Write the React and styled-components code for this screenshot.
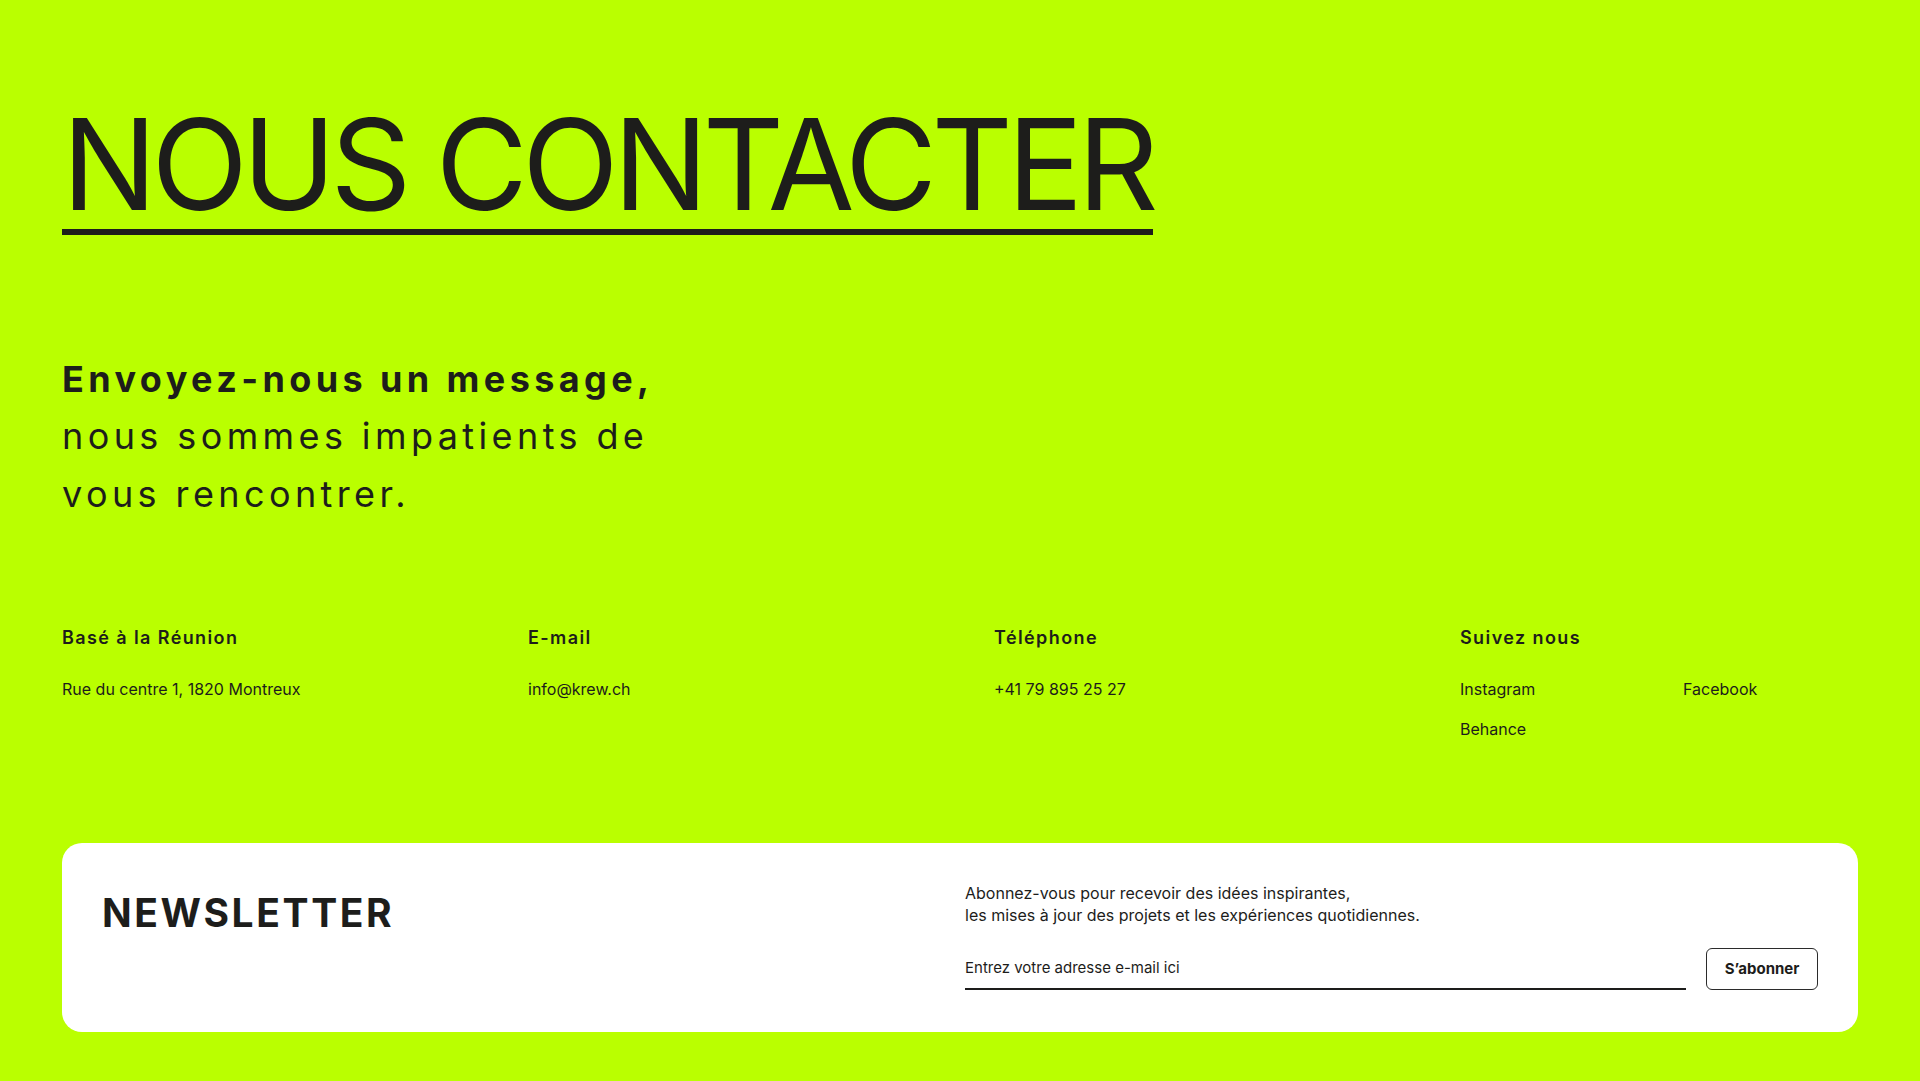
import styled, { createGlobalStyle } from 'styled-components';

const GlobalStyle = createGlobalStyle`
  html, body {
    margin: 0;
    padding: 0;
    background-color: #baff00;
  }
  body {
    font-family: Inter, 'Liberation Sans', Arial, sans-serif;
    color: #1d1d1b;
  }
  * {
    box-sizing: border-box;
  }
`;

const Page = styled.main`
  display: flex;
  flex-direction: column;
  min-height: 1081px;
  padding: 105px 62px 49px;
  background-color: #baff00;
`;

const Title = styled.h1`
  align-self: flex-start;
  margin: 0;
  padding-bottom: 4px;
  font-size: 126px;
  font-weight: 400;
  line-height: 0.95;
  letter-spacing: -5.5px;
  border-bottom: 6px solid #1d1d1b;
`;

const Intro = styled.p`
  margin: 116px 0 0;
  font-size: 36px;
  line-height: 57.6px;
  letter-spacing: 4.4px;
`;

const Strong = styled.strong`
  font-weight: 700;
`;

const InfoGrid = styled.section`
  display: grid;
  grid-template-columns: repeat(4, 1fr);
  column-gap: 68px;
  margin-top: 103px;
`;

const InfoBlock = styled.div`
  display: flex;
  flex-direction: column;
  gap: 27px;
`;

const Label = styled.h3`
  margin: 0;
  font-size: 18px;
  font-weight: 600;
  line-height: 23.4px;
  letter-spacing: 1.4px;
`;

const Value = styled.span`
  font-size: 16px;
  line-height: 24px;
`;

const Socials = styled.div`
  display: grid;
  grid-template-columns: 223px 1fr;
  row-gap: 16px;
`;

const Card = styled.section`
  display: grid;
  grid-template-columns: 1fr 1fr;
  column-gap: 10px;
  margin-top: 102px;
  padding: 39px 40px 42px;
  background-color: #fff;
  border-radius: 20px;
`;

const CardTitle = styled.h2`
  margin: 7px 0 0;
  font-size: 39px;
  font-weight: 700;
  line-height: 48px;
  letter-spacing: 2.6px;
`;

const CardRight = styled.div`
  display: flex;
  flex-direction: column;
  gap: 22px;
`;

const CardText = styled.p`
  margin: 0;
  font-size: 16px;
  line-height: 22px;
`;

const Form = styled.form`
  display: flex;
  align-items: flex-end;
  gap: 20px;
`;

const EmailInput = styled.input`
  flex: 1;
  height: 40px;
  padding: 0 0 3px;
  border: none;
  border-bottom: 2px solid #1d1d1b;
  background: transparent;
  font-family: inherit;
  font-size: 15px;
  color: #1d1d1b;
  outline: none;
  &::placeholder {
    color: #1d1d1b;
    opacity: 1;
  }
`;

const SubmitButton = styled.button`
  width: 112px;
  height: 42px;
  padding: 0;
  border: 1px solid #2b2b2b;
  border-radius: 6px;
  background-color: #fff;
  font-family: inherit;
  font-size: 15px;
  font-weight: 700;
  color: #1d1d1b;
  cursor: pointer;
`;

const infos = [
  { label: 'Basé à la Réunion', value: 'Rue du centre 1, 1820 Montreux' },
  { label: 'E-mail', value: 'info@krew.ch' },
  { label: 'Téléphone', value: '+41 79 895 25 27' },
];

const socials = ['Instagram', 'Facebook', 'Behance'];

const App = () => {
  return (
    <>
      <GlobalStyle />
      <Page>
        <Title>NOUS CONTACTER</Title>

        <Intro>
          <Strong>Envoyez-nous un message,</Strong>
          <br />
          nous sommes impatients de
          <br />
          vous rencontrer.
        </Intro>

        <InfoGrid>
          {infos.map((info) => (
            <InfoBlock key={info.label}>
              <Label>{info.label}</Label>
              <Value>{info.value}</Value>
            </InfoBlock>
          ))}
          <InfoBlock>
            <Label>Suivez nous</Label>
            <Socials>
              {socials.map((name) => (
                <Value key={name}>{name}</Value>
              ))}
            </Socials>
          </InfoBlock>
        </InfoGrid>

        <Card>
          <CardTitle>NEWSLETTER</CardTitle>
          <CardRight>
            <CardText>
              Abonnez-vous pour recevoir des idées inspirantes,
              <br />
              les mises à jour des projets et les expériences quotidiennes.
            </CardText>
            <Form onSubmit={(e) => e.preventDefault()}>
              <EmailInput type="email" placeholder="Entrez votre adresse e-mail ici" />
              <SubmitButton type="submit">S’abonner</SubmitButton>
            </Form>
          </CardRight>
        </Card>
      </Page>
    </>
  );
};

export default App;
